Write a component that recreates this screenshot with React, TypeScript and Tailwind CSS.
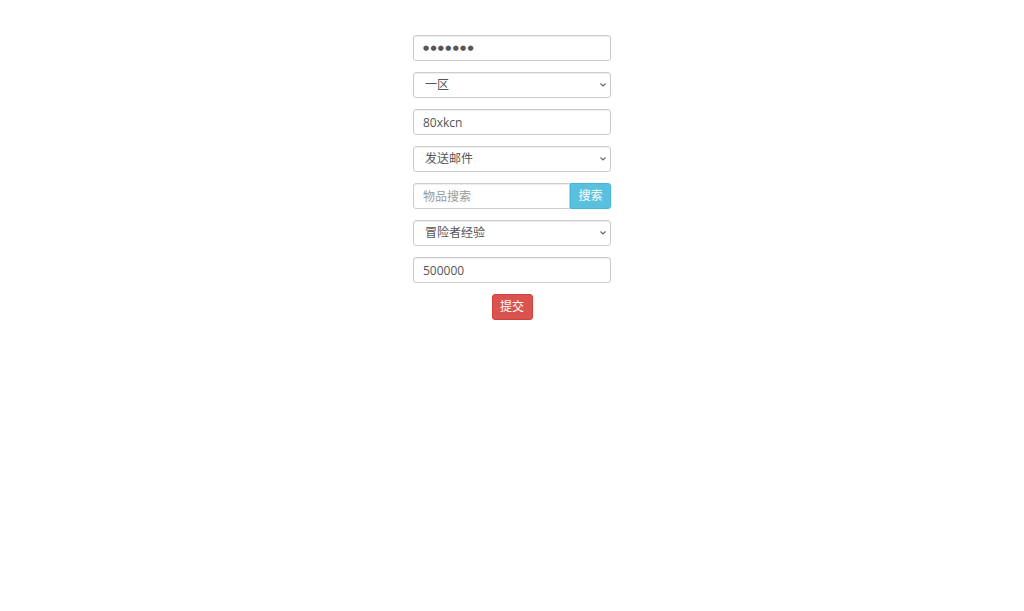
import { useState } from "react";

function Chevron() {
  return (
    <svg
      className="pointer-events-none absolute right-[4px] top-1/2 -translate-y-1/2"
      width="8"
      height="6"
      viewBox="0 0 8 6"
      fill="none"
    >
      <path d="M1.5 1.5 L4 4 L6.5 1.5" stroke="#666" strokeWidth="1.1" />
    </svg>
  );
}

function Select({ value, options }: { value: string; options: string[] }) {
  const [v, setV] = useState(value);
  return (
    <div className="relative h-[26px]">
      <select
        value={v}
        onChange={(e) => setV(e.target.value)}
        className="block h-[26px] w-full appearance-none rounded-[3px] border border-[#ccc] bg-white pl-[11px] text-[12px] text-[#555] shadow-[inset_0_1px_1px_rgba(0,0,0,0.075)] outline-none"
      >
        {options.map((o) => (
          <option key={o}>{o}</option>
        ))}
      </select>
      <Chevron />
    </div>
  );
}

const inputCls =
  "block h-[26px] w-full rounded-[3px] border border-[#ccc] bg-white px-[9px] text-[12px] text-[#555] shadow-[inset_0_1px_1px_rgba(0,0,0,0.075)] outline-none placeholder:text-[#999]";

export default function App() {
  return (
    <div
      className="min-h-[611px] w-full bg-white pt-[35px]"
      style={{ fontFamily: '"Open Sans", "Noto Sans CJK SC", sans-serif' }}
    >
      <form className="mx-auto flex w-[198px] flex-col gap-[11px]">
        <input
          type="text"
          readOnly
          value="●●●●●●●"
          className="block h-[26px] w-full rounded-[3px] border border-[#ccc] bg-white px-[9px] font-['DejaVu_Sans'] text-[7px] tracking-[1.3px] text-[#555] shadow-[inset_0_1px_1px_rgba(0,0,0,0.075)] outline-none"
        />
        <Select value="一区" options={["一区", "二区", "三区"]} />
        <input type="text" defaultValue="80xkcn" className={inputCls} />
        <Select value="发送邮件" options={["发送邮件", "发送物品"]} />
        <div className="flex h-[26px]">
          <input
            type="text"
            placeholder="物品搜索"
            className="block h-[26px] min-w-0 flex-1 rounded-l-[3px] border border-[#ccc] bg-white px-[9px] text-[12px] text-[#555] shadow-[inset_0_1px_1px_rgba(0,0,0,0.075)] outline-none placeholder:text-[#999]"
          />
          <button
            type="button"
            className="h-[26px] w-[41px] shrink-0 rounded-r-[3px] border border-[#46b8da] bg-[#5bc0de] text-[12px] text-white"
          >
            搜索
          </button>
        </div>
        <Select value="冒险者经验" options={["冒险者经验", "金币"]} />
        <input type="text" defaultValue="500000" className={inputCls} />
        <div className="flex justify-center">
          <button
            type="button"
            className="h-[26px] w-[41px] rounded-[3px] border border-[#d43f3a] bg-[#d9534f] text-[12px] text-white"
          >
            提交
          </button>
        </div>
      </form>
    </div>
  );
}
